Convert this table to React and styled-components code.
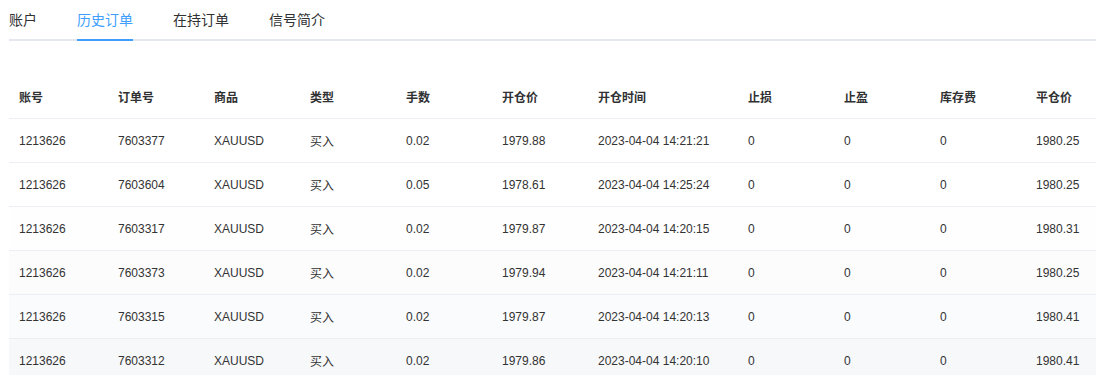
import styled, { createGlobalStyle } from "styled-components";

const GlobalStyle = createGlobalStyle`
  html, body {
    margin: 0;
    padding: 0;
    background: #ffffff;
    overflow: hidden;
  }
  body {
    font-family: "Liberation Sans", Arial, "Noto Sans CJK SC", sans-serif;
    color: #303133;
  }
`

const Page = styled.div`
  padding-left: 9px;
  width: 1087px;
  overflow: hidden;
`

const TabBar = styled.div`
  display: flex;
  height: 41px;
  border-bottom: 2px solid #e4e7ed;
  box-sizing: border-box;
`

const Tab = styled.div`
  position: relative;
  height: 39px;
  line-height: 40px;
  font-size: 14px;
  padding: 0 20px;
  color: ${props => props.active ? "#409eff" : "#303133"};

  &:first-child {
    padding-left: 0;
  }

  &::after {
    content: "";
    display: ${props => props.active ? "block" : "none"};
    position: absolute;
    left: 20px;
    right: 20px;
    bottom: -2px;
    height: 2px;
    background: #409eff;
  }
`

const TableWrap = styled.div`
  margin-top: 34px;
  width: 1200px;
`

const Table = styled.table`
  border-collapse: collapse;
  table-layout: fixed;
  width: 1113px;
  font-size: 12px;
`

const HeadCell = styled.th`
  height: 43px;
  padding: 0 10px;
  text-align: left;
  font-weight: bold;
  color: #303133;
  border-bottom: 1px solid #ebeef5;
`

const Row = styled.tr`
  background: ${props => props.bg};
`

const Cell = styled.td`
  height: 43px;
  padding: 0 10px;
  color: #333333;
  border-bottom: 1px solid #ebeef5;
  white-space: nowrap;
`

const columns = [
  ["账号", 99],
  ["订单号", 96],
  ["商品", 96],
  ["类型", 96],
  ["手数", 96],
  ["开仓价", 96],
  ["开仓时间", 150],
  ["止损", 96],
  ["止盈", 96],
  ["库存费", 96],
  ["平仓价", 96],
]

const orders = [
  ["7603377", "0.02", "1979.88", "2023-04-04 14:21:21", "1980.25"],
  ["7603604", "0.05", "1978.61", "2023-04-04 14:25:24", "1980.25"],
  ["7603317", "0.02", "1979.87", "2023-04-04 14:20:15", "1980.31"],
  ["7603373", "0.02", "1979.94", "2023-04-04 14:21:11", "1980.25"],
  ["7603315", "0.02", "1979.87", "2023-04-04 14:20:13", "1980.41"],
  ["7603312", "0.02", "1979.86", "2023-04-04 14:20:10", "1980.41"],
]

const shades = ["#ffffff", "#ffffff", "#fefefe", "#fcfcfd", "#fafbfc", "#f7f8fa"]

function App () {
  return (
    <Page>
      <GlobalStyle />

      <TabBar>
        <Tab>账户</Tab>
        <Tab active>历史订单</Tab>
        <Tab>在持订单</Tab>
        <Tab>信号简介</Tab>
      </TabBar>

      <TableWrap>
        <Table>
          <colgroup>
            {columns.map(([name, w]) => <col key={name} style={{ width: w }} />)}
          </colgroup>
          <thead>
            <tr>
              {columns.map(([name]) => <HeadCell key={name}>{name}</HeadCell>)}
            </tr>
          </thead>
          <tbody>
            {orders.map(([id, lots, open, time, close], i) => (
              <Row key={id} bg={shades[i]}>
                <Cell>1213626</Cell>
                <Cell>{id}</Cell>
                <Cell>XAUUSD</Cell>
                <Cell>买入</Cell>
                <Cell>{lots}</Cell>
                <Cell>{open}</Cell>
                <Cell>{time}</Cell>
                <Cell>0</Cell>
                <Cell>0</Cell>
                <Cell>0</Cell>
                <Cell>{close}</Cell>
              </Row>
            ))}
          </tbody>
        </Table>
      </TableWrap>
    </Page>
  )
}

export default App
